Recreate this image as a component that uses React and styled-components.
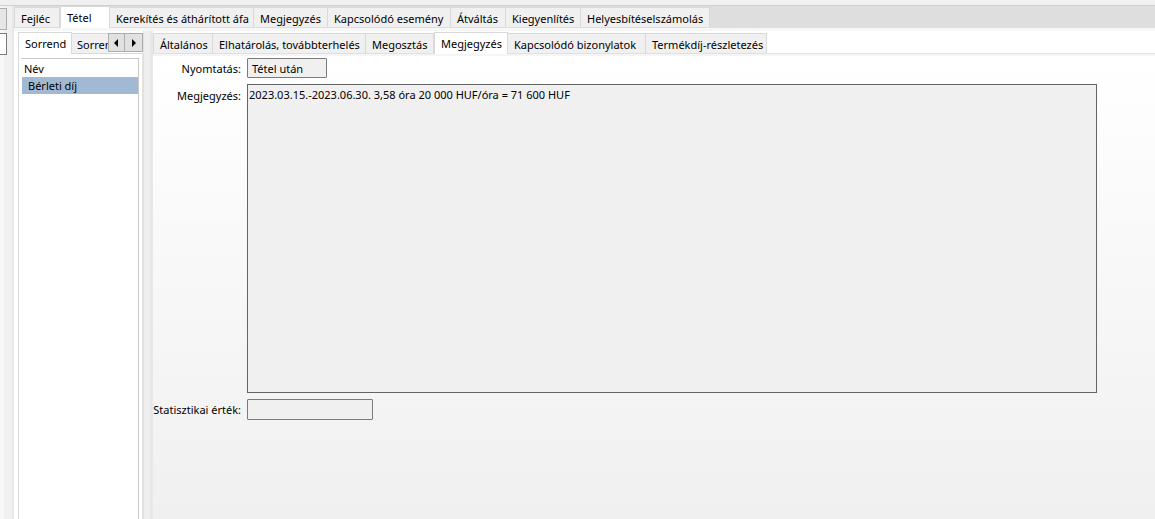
import React from 'react';
import styled, { createGlobalStyle } from 'styled-components';

const GlobalStyle = createGlobalStyle`
  html, body {
    margin: 0;
    padding: 0;
    background: #f0f0f0;
  }
  body {
    font-family: "Noto Sans", "Open Sans", sans-serif;
    font-size: 11px;
    color: #000;
  }
`;

const mainTabs = [
  { label: 'Fejléc', w: 46 },
  { label: 'Tétel', w: 50, active: true },
  { label: 'Kerekítés és áthárított áfa', w: 144 },
  { label: 'Megjegyzés', w: 74 },
  { label: 'Kapcsolódó esemény', w: 123 },
  { label: 'Átváltás', w: 55 },
  { label: 'Kiegyenlítés', w: 75 },
  { label: 'Helyesbítéselszámolás', w: 129 },
];

const detailTabs = [
  { label: 'Általános', w: 60 },
  { label: 'Elhatárolás, továbbterhelés', w: 153 },
  { label: 'Megosztás', w: 68 },
  { label: 'Megjegyzés', w: 74, active: true },
  { label: 'Kapcsolódó bizonylatok', w: 138 },
  { label: 'Termékdíj-részletezés', w: 121 },
];

const App = () => {
  return (
    <>
      <GlobalStyle />
      <Page>
        <TopCut />
        <Body>
          <LeftStrip>
            <StubBox />
            <StubField />
          </LeftStrip>
          <Main>
            <TabStrip $bg="#dedede" $border="#d0d0d0">
              {mainTabs.map(t => (
                <Tab key={t.label} $w={t.w} $active={t.active}>{t.label}</Tab>
              ))}
            </TabStrip>
            <MainPage>
              <SidePanel>
                <SideTabs>
                  <Tab $w={54} $active>Sorrend</Tab>
                  <CutTab>Sorren</CutTab>
                  <ArrowButton>
                    <svg width="6" height="8" viewBox="0 0 6 8"><path d="M5 0 L1 4 L5 8 Z" fill="#000" /></svg>
                  </ArrowButton>
                  <ArrowButton>
                    <svg width="6" height="8" viewBox="0 0 6 8"><path d="M1 0 L5 4 L1 8 Z" fill="#000" /></svg>
                  </ArrowButton>
                </SideTabs>
                <SidePage>
                  <ListBox>
                    <ListHeader>Név</ListHeader>
                    <ListRow $selected>Bérleti díj</ListRow>
                  </ListBox>
                </SidePage>
              </SidePanel>
              <Splitter />
              <DetailPanel>
                <TabStrip $bg="#ffffff" $border="transparent" $bottom="#e0e0e0" $pt={2}>
                  {detailTabs.map(t => (
                    <Tab key={t.label} $w={t.w} $active={t.active}>{t.label}</Tab>
                  ))}
                </TabStrip>
                <Content>
                  <FormGrid>
                    <Label>Nyomtatás:</Label>
                    <Field $w={80} $h={20}>Tétel után</Field>
                    <Label $top>Megjegyzés:</Label>
                    <Memo>2023.03.15.-2023.06.30. 3,58 óra 20 000 HUF/óra = 71 600 HUF</Memo>
                    <Label>Statisztikai érték:</Label>
                    <Field $w={126} $h={21} />
                  </FormGrid>
                </Content>
              </DetailPanel>
            </MainPage>
          </Main>
        </Body>
      </Page>
    </>
  );
};

const Page = styled.div`
  width: 1155px;
  height: 519px;
  display: flex;
  flex-direction: column;
  overflow: hidden;
  background: #f0f0f0;
`;

const TopCut = styled.div`
  height: 5px;
  flex: none;
  background: #f0f0f0;
`;

const Body = styled.div`
  flex: 1;
  display: flex;
  min-height: 0;
`;

const LeftStrip = styled.div`
  width: 14px;
  flex: none;
  display: flex;
  flex-direction: column;
  gap: 3px;
  padding-top: 2px;
  background: linear-gradient(to right, #f7f7f7 0 4px, #f0f0f0 4px 12px, #e8e8e8 12px 14px);
  border-top: 1px solid #d0d0d0;
  box-sizing: border-box;
`;

const StubBox = styled.div`
  width: 6px;
  height: 20px;
  background: #e6e6e6;
  border: 1px solid #adadad;
  border-left: none;
`;

const StubField = styled.div`
  width: 6px;
  height: 20px;
  background: #fff;
  border: 1px solid #7a7a7a;
  border-left: none;
`;

const Main = styled.div`
  flex: 1;
  display: flex;
  flex-direction: column;
  min-width: 0;
`;

const TabStrip = styled.div`
  height: 23px;
  flex: none;
  display: flex;
  align-items: flex-end;
  box-sizing: border-box;
  background: ${p => p.$bg};
  border-top: 1px solid ${p => p.$border};
  border-bottom: 1px solid ${p => p.$bottom || 'transparent'};
  padding-top: ${p => p.$pt || 0}px;
`;

const Tab = styled.div`
  width: ${p => p.$w}px;
  flex: none;
  box-sizing: border-box;
  height: ${p => (p.$active ? 22 : 20)}px;
  margin-bottom: ${p => (p.$active ? -1 : 0)}px;
  padding: ${p => (p.$active ? '3px 0 0 6px' : '3px 0 0 6px')};
  background: ${p => (p.$active ? '#ffffff' : '#f0f0f0')};
  border: 1px solid #d9d9d9;
  border-bottom: none;
  border-left-width: ${p => (p.$active ? 1 : 0)}px;
  white-space: nowrap;
  overflow: hidden;
  position: relative;
  z-index: ${p => (p.$active ? 1 : 0)};
  &:first-child {
    border-left-width: 1px;
  }
`;

const MainPage = styled.div`
  flex: 1;
  display: flex;
  min-height: 0;
  background: #fff;
  border-top: 3px solid #f7f7f7;
`;

const SidePanel = styled.div`
  width: 129px;
  flex: none;
  display: flex;
  flex-direction: column;
  padding-left: 4px;
  box-sizing: border-box;
`;

const SideTabs = styled.div`
  height: 22px;
  flex: none;
  display: flex;
  align-items: flex-end;
`;

const CutTab = styled.div`
  width: 36px;
  height: 20px;
  box-sizing: border-box;
  padding: 3px 0 0 5px;
  background: #f0f0f0;
  border-top: 1px solid #d9d9d9;
  white-space: nowrap;
  overflow: hidden;
`;

const ArrowButton = styled.div`
  width: 18px;
  height: 19px;
  margin-bottom: 1px;
  box-sizing: border-box;
  display: flex;
  align-items: center;
  justify-content: center;
  background: #e1e1e1;
  border: 1px solid #adadad;
  & + & {
    border-left: none;
  }
`;

const SidePage = styled.div`
  flex: 1;
  display: flex;
  flex-direction: column;
  padding: 4px 3px 0 2px;
  background: #fff;
  border-left: 1px solid #d9d9d9;
  border-top: 1px solid #d9d9d9;
  border-right: 1px solid #e3e3e3;
`;

const ListBox = styled.div`
  flex: 1;
  background: #fff;
  border-top: 1px solid #c8c8c8;
  border-right: 1px solid #c8c8c8;
  padding-top: 1px;
`;

const ListHeader = styled.div`
  height: 17px;
  box-sizing: border-box;
  padding: 1px 0 0 3px;
`;

const ListRow = styled.div`
  height: 17px;
  box-sizing: border-box;
  padding: 1px 0 0 6px;
  margin-left: 1px;
  background: ${p => (p.$selected ? '#a2b9d4' : 'transparent')};
`;

const Splitter = styled.div`
  width: 10px;
  flex: none;
  background: #efefef;
  border-left: 1px solid #e0e0e0;
  border-right: 3px solid #e8e8e8;
  box-sizing: border-box;
`;

const DetailPanel = styled.div`
  flex: 1;
  display: flex;
  flex-direction: column;
  min-width: 0;
`;

const Content = styled.div`
  flex: 1;
  background: linear-gradient(to bottom, #ffffff, #f0f0f0);
  border-top: 2px solid #f5f5f5;
  padding: 2px 0 0 0;
`;

const FormGrid = styled.div`
  display: grid;
  grid-template-columns: 90px auto;
  column-gap: 4px;
  row-gap: 6px;
  align-items: center;
  justify-content: start;
`;

const Label = styled.div`
  text-align: right;
  white-space: nowrap;
  padding-right: 2px;
  align-self: ${p => (p.$top ? 'start' : 'center')};
  padding-top: ${p => (p.$top ? 4 : 0)}px;
`;

const Field = styled.div`
  width: ${p => p.$w}px;
  height: ${p => p.$h}px;
  box-sizing: border-box;
  padding: 2px 0 0 4px;
  background: #f0f0f0;
  border: 1px solid #7a7a7a;
  border-radius: 1px;
`;

const Memo = styled.div`
  width: 850px;
  height: 309px;
  box-sizing: border-box;
  padding: 2px 0 0 1px;
  background: #f0f0f0;
  border: 1px solid #646464;
  white-space: nowrap;
`;

export default App;
